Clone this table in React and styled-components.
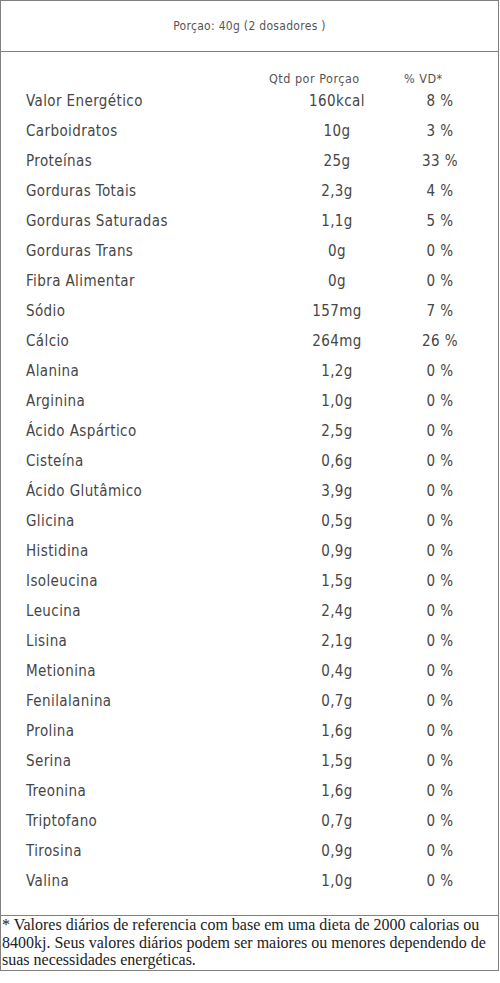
import React from 'react';
import styled, { createGlobalStyle } from 'styled-components';

const rows = [
    ['Valor Energético', '160kcal', '8 %'],
    ['Carboidratos', '10g', '3 %'],
    ['Proteínas', '25g', '33 %'],
    ['Gorduras Totais', '2,3g', '4 %'],
    ['Gorduras Saturadas', '1,1g', '5 %'],
    ['Gorduras Trans', '0g', '0 %'],
    ['Fibra Alimentar', '0g', '0 %'],
    ['Sódio', '157mg', '7 %'],
    ['Cálcio', '264mg', '26 %'],
    ['Alanina', '1,2g', '0 %'],
    ['Arginina', '1,0g', '0 %'],
    ['Ácido Aspártico', '2,5g', '0 %'],
    ['Cisteína', '0,6g', '0 %'],
    ['Ácido Glutâmico', '3,9g', '0 %'],
    ['Glicina', '0,5g', '0 %'],
    ['Histidina', '0,9g', '0 %'],
    ['Isoleucina', '1,5g', '0 %'],
    ['Leucina', '2,4g', '0 %'],
    ['Lisina', '2,1g', '0 %'],
    ['Metionina', '0,4g', '0 %'],
    ['Fenilalanina', '0,7g', '0 %'],
    ['Prolina', '1,6g', '0 %'],
    ['Serina', '1,5g', '0 %'],
    ['Treonina', '1,6g', '0 %'],
    ['Triptofano', '0,7g', '0 %'],
    ['Tirosina', '0,9g', '0 %'],
    ['Valina', '1,0g', '0 %'],
];

const App = () => {
    return (
        <>
            <GlobalStyle />
            <Table>
                <Portion>Porçao: 40g (2 dosadores )</Portion>
                <Body>
                    <HeaderRow>
                        <HeaderCell width={135}>Qtd por Porçao</HeaderCell>
                        <HeaderCell>% VD*</HeaderCell>
                    </HeaderRow>
                    {rows.map(([name, qty, vd]) => (
                        <Row key={name}>
                            <Name>{name}</Name>
                            <Value>{qty}</Value>
                            <Value>{vd}</Value>
                        </Row>
                    ))}
                </Body>
                <Footnote>
                    * Valores diários de referencia com base em uma dieta de 2000 calorias ou
                    8400kj. Seus valores diários podem ser maiores ou menores dependendo de
                    suas necessidades energéticas.
                </Footnote>
            </Table>
        </>
    );
};

const GlobalStyle = createGlobalStyle`
    body {
        margin: 0;
        background: #ffffff;
    }
`;

const Table = styled.div`
    width: 499px;
    box-sizing: border-box;
    border: 1px solid #808080;
    font-family: "DejaVu Sans Condensed", Tahoma, "DejaVu Sans", sans-serif;
    color: #464646;
`;

const Portion = styled.div`
    height: 50px;
    display: flex;
    align-items: center;
    justify-content: center;
    font-size: 12px;
    letter-spacing: 0.3px;
    color: #555555;
    border-bottom: 1px solid #808080;
`;

const Body = styled.div`
    padding: 18px 0 19px;
`;

const HeaderRow = styled.div`
    display: flex;
    height: 16px;
    align-items: center;
    padding-left: 268px;
    font-size: 12.5px;
    letter-spacing: 0.5px;
    color: #555555;
`;

const HeaderCell = styled.div`
    width: ${props => props.width ? props.width + 'px' : 'auto'};
`;

const Row = styled.div`
    display: grid;
    grid-template-columns: 251px 120px 86px;
    height: 30px;
    align-items: center;
    padding-left: 25px;
    font-size: 15px;
    letter-spacing: 0.4px;
`;

const Name = styled.div`
    white-space: nowrap;
`;

const Value = styled.div`
    text-align: center;
`;

const Footnote = styled.div`
    border-top: 1px solid #808080;
    padding: 0 4px 1px 1px;
    font-family: "Liberation Serif", "Times New Roman", serif;
    font-size: 16px;
    line-height: 17.7px;
    color: #222222;
`;

export default App;
